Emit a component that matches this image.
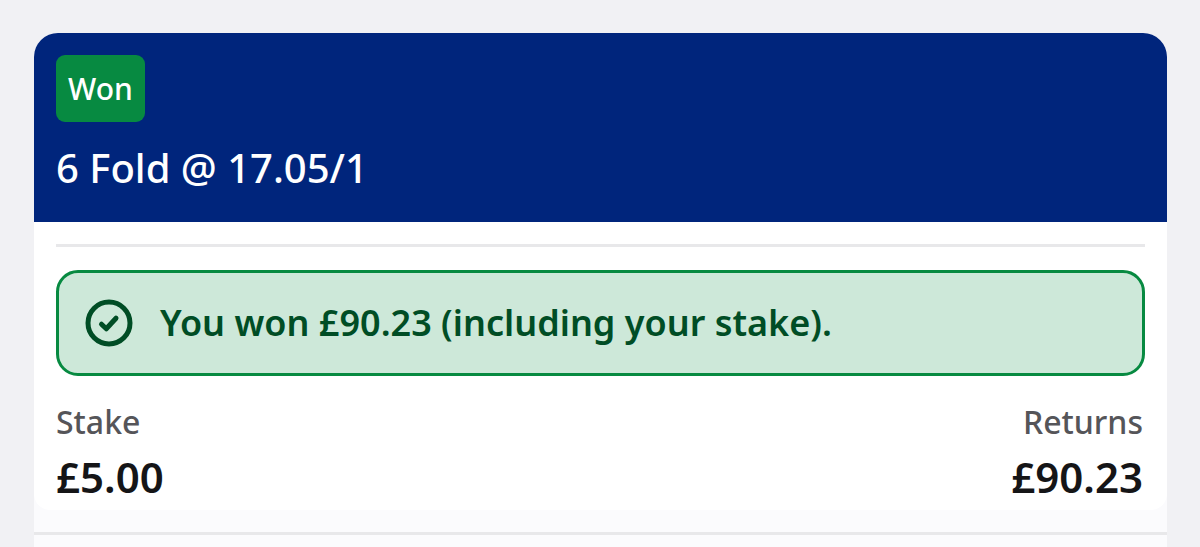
<main>
  <div class="panel">
    <article class="bet">
      <header class="head">
        <span class="badge">Won</span>
        <h1>6 Fold @ 17.05/1</h1>
      </header>
      <div class="body">
        <hr />
        <p class="notice">
          <svg viewBox="0 0 48 48" aria-hidden="true">
            <circle cx="24" cy="24" r="21" />
            <path d="M16.5 25.2l4.8 4.6L31 19.2" />
          </svg>
          <span>You won £90.23 (including your stake).</span>
        </p>
        <dl>
          <div><dt>Stake</dt><dd>£5.00</dd></div>
          <div class="end"><dt>Returns</dt><dd>£90.23</dd></div>
        </dl>
      </div>
    </article>
    <footer></footer>
  </div>
</main>

<style>
  :global(body) { background: #f1f1f4; }
  main {
    padding: 33px 33px 0 34px;
    font-family: "Noto Sans", "Open Sans", sans-serif;
    font-weight: 500;
  }
  .panel { background: #fbfbfd; border-radius: 24px 24px 0 0; }
  .bet { background: #fff; border-radius: 24px 24px 16px 16px; overflow: hidden; }
  .head {
    display: flex;
    flex-direction: column;
    align-items: flex-start;
    gap: 20px;
    padding: 22px 22px 28px;
    background: #00257c;
    color: #fff;
  }
  .badge {
    padding: 0 12px;
    border-radius: 9px;
    background: #078a41;
    font-size: 30px;
    line-height: 67px;
  }
  h1 { margin: 0; font-size: 40px; line-height: 52px; font-weight: 500; }
  .body { padding: 22px 22px 0; }
  hr { margin: 0 0 23px; border: 0; height: 3px; background: #e8e8ea; }
  .notice {
    display: flex;
    align-items: center;
    gap: 27px;
    margin: 0 0 24px;
    padding: 26px;
    border: 3px solid #078a41;
    border-radius: 22px;
    background: #cde8d9;
    color: #004d25;
    font-size: 36px;
    line-height: 48px;
    font-weight: 600;
  }
  svg {
    width: 48px;
    height: 48px;
    flex: none;
    fill: none;
    stroke: #004d25;
    stroke-width: 5;
    stroke-linecap: round;
    stroke-linejoin: round;
  }
  dl { display: flex; justify-content: space-between; margin: 0; padding-right: 2px; }
  .end { text-align: right; }
  dt { color: #555559; font-size: 32px; line-height: 44px; }
  dd { margin: 0; padding: 3px 0; color: #151517; font-size: 42px; line-height: 60px; font-weight: 600; }
  footer { padding: 22px 0 12px; }
  footer::before { content: ""; display: block; height: 3px; background: #e8e8ea; }
</style>
